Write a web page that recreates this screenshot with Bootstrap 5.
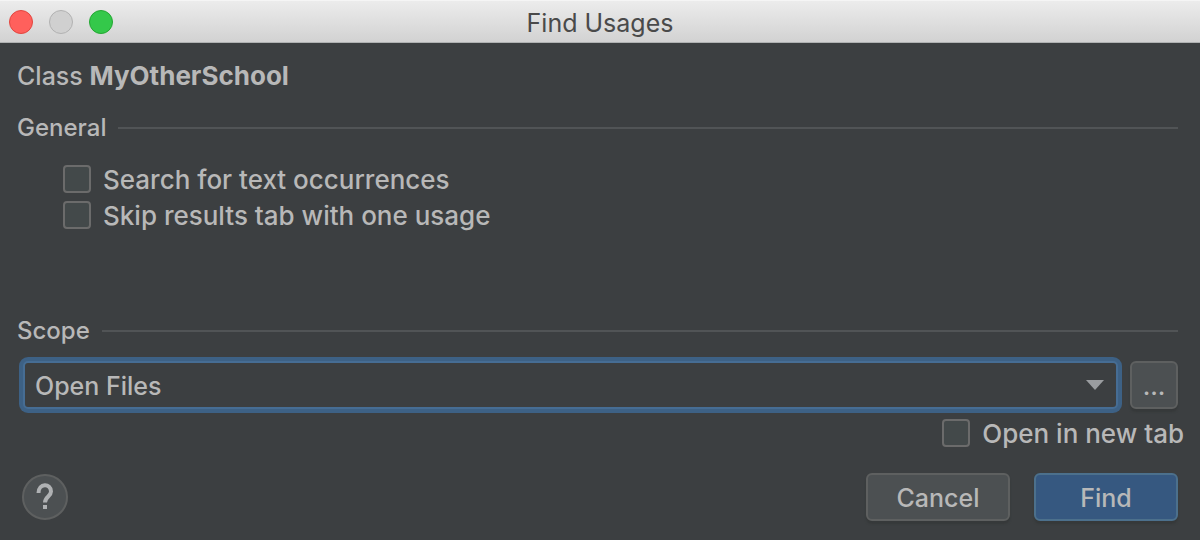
<!DOCTYPE html>
<html lang="en" data-bs-theme="dark">
<head>
<meta charset="utf-8">
<meta name="viewport" content="width=device-width, initial-scale=1">
<title>Find Usages</title>
<link href="https://cdn.jsdelivr.net/npm/bootstrap@5.3.0/dist/css/bootstrap.min.css" rel="stylesheet">
<style>
  body { font-family: Inter, Roboto, sans-serif; font-size: 26px; line-height: 36px; font-weight: 500; background: #3c3f41; color: #b8b8b8; }
  .titlebar { display: grid; grid-template-columns: 1fr auto 1fr; height: 43px; padding: 0 9px 2px; background: linear-gradient(#ececec, #d2d2d2); border-top: 1px solid #f5f5f5; border-bottom: 1px solid #b0b2b2; }
  .titlebar h1 { font-size: 25px; line-height: 40px; padding-top: 2px; font-weight: 400; color: #4a4a4a; }
  .light { width: 24px; height: 24px; padding: 0; border: 1px solid; border-radius: 50%; }
  .light-close { background: #ff605c; border-color: #e2463f; }
  .light-min { background: #d0d0d0; border-color: #b2b2b2; }
  .light-zoom { background: #34c84a; border-color: #24a732; }
  .dialog-body { padding: 15px 22px 19px 17px; }
  .subject { font-size: 25px; }
  .subject strong { font-size: 26px; }
  .section-title { font-size: 24px; line-height: 36px; font-weight: 500; color: #b8b8b8; }
  .section-rule { height: 2px; background: #515456; }
  .options { padding: 15px 0 0 46px; margin-bottom: 80px; }
  .tick { display: flex; align-items: center; gap: 12px; font-size: 26px; line-height: 34px; height: 36px; }
  .tick label { padding-top: 2px; }
  .form-check-input.tick-box { flex: none; float: none; width: 28px; height: 28px; margin: 0; border: 2px solid #6b6b6b; border-radius: 4px; background-color: #43494a; }
  .scope-row { gap: 12px; padding: 12px 0 6px 6px; }
  .form-select.scope-select { height: 48px; padding: 2px 40px 0 10px; font-size: 25px; line-height: 36px; font-weight: 500; color: #b8b8b8; background-color: #3c3f41;
    background-image: url("data:image/svg+xml,%3Csvg xmlns='http://www.w3.org/2000/svg' viewBox='0 0 18 10'%3E%3Cpath fill='%239a9da0' d='M0 0h18L9 10z'/%3E%3C/svg%3E");
    background-position: right 12px center; background-size: 18px 10px; border: 2px solid #466d94; border-radius: 5px; box-shadow: 0 0 0 4px #3d6185; }
  .dlg-btn { height: 48px; padding: 2px 0 0; border: 2px solid #5e6060; border-radius: 6px; background: #4c5052; color: #b8b8b8; font-size: 25px; line-height: 36px; font-weight: 500; box-shadow: 0 3px 2px #36393a; }
  .dlg-btn.primary { background: #365880; border-color: #4c708c; }
  .btn-wide { width: 144px; }
  .btn-more { flex: none; width: 48px; }
  .new-tab { margin-right: -6px; }
  .footer-row { padding: 22px 0 0 5px; }
  .help { width: 46px; height: 46px; padding: 0; border: 2px solid #5e6060; border-radius: 50%; background: #4c5052; color: #afb1b3; }
  .help svg { display: block; }
</style>
</head>
<body>
<header class="titlebar align-items-center">
  <div class="d-flex gap-3">
    <button type="button" class="light light-close" aria-label="Close"></button>
    <button type="button" class="light light-min" aria-label="Minimize" disabled></button>
    <button type="button" class="light light-zoom" aria-label="Zoom"></button>
  </div>
  <h1 class="mb-0">Find Usages</h1>
</header>
<main>
  <form class="dialog-body">
    <p class="subject mb-3">Class <strong>MyOtherSchool</strong></p>
    <div class="d-flex align-items-center gap-2">
      <h2 class="section-title m-0 pe-1">General</h2>
      <div class="section-rule flex-grow-1"></div>
    </div>
    <div class="options">
      <div class="tick"><input class="form-check-input tick-box" type="checkbox" id="text"><label for="text">Search for text occurrences</label></div>
      <div class="tick"><input class="form-check-input tick-box" type="checkbox" id="skip"><label for="skip">Skip results tab with one usage</label></div>
    </div>
    <div class="d-flex align-items-center gap-2">
      <h2 class="section-title m-0 pe-1"><label for="scope">Scope</label></h2>
      <div class="section-rule flex-grow-1"></div>
    </div>
    <div class="scope-row d-flex">
      <select class="form-select scope-select" id="scope"><option>Open Files</option></select>
      <button type="button" class="btn dlg-btn btn-more" aria-label="Choose scope">...</button>
    </div>
    <div class="d-flex justify-content-end">
      <div class="tick new-tab"><input class="form-check-input tick-box" type="checkbox" id="newtab"><label for="newtab">Open in new tab</label></div>
    </div>
    <div class="footer-row d-flex align-items-center">
      <button type="button" class="help me-auto" aria-label="Help">
        <svg width="42" height="42" viewBox="0 0 42 42" aria-hidden="true"><path d="M14.500 17C14.500 7 27 7 27 15.500C27 20.500 21 20.500 21 26.500" fill="none" stroke="currentColor" stroke-width="4"/><path d="M19 29h4v4h-4z" fill="currentColor"/></svg>
      </button>
      <button type="button" class="btn dlg-btn btn-wide me-4">Cancel</button>
      <button type="submit" class="btn dlg-btn btn-wide primary">Find</button>
    </div>
  </form>
</main>
<script src="https://cdn.jsdelivr.net/npm/bootstrap@5.3.0/dist/js/bootstrap.bundle.min.js"></script>
</body>
</html>
